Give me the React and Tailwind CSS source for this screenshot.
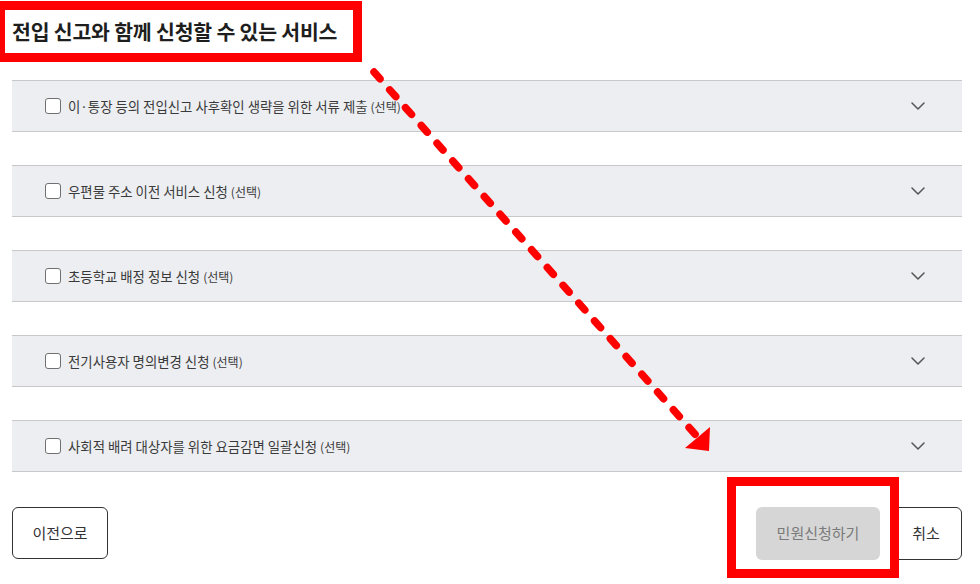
import React from "react";

const items = [
  "이·통장 등의 전입신고 사후확인 생략을 위한 서류 제출",
  "우편물 주소 이전 서비스 신청",
  "초등학교 배정 정보 신청",
  "전기사용자 명의변경 신청",
  "사회적 배려 대상자를 위한 요금감면 일괄신청",
];

function Chevron() {
  return (
    <svg width="14" height="8" viewBox="0 0 14 8" fill="none">
      <polyline points="1,1 7,7 13,1" stroke="#555" strokeWidth="1.5" strokeLinecap="round" strokeLinejoin="round" />
    </svg>
  );
}

export default function App() {
  return (
    <div className="relative w-[980px] h-[584px] bg-white overflow-hidden font-['Noto_Sans_CJK_KR',sans-serif] text-[#333]">
      <div className="h-[62px] flex items-center pl-[12px]">
        <h2 className="text-[20.5px] font-bold text-[#1e1e1e] tracking-[-0.2px]">전입 신고와 함께 신청할 수 있는 서비스</h2>
      </div>
      <div className="mt-[18px] ml-[12px] w-[950px] flex flex-col gap-[33px]">
        {items.map((t) => (
          <div key={t} className="h-[52px] bg-[#eceef1] border-y border-[#c8c8c8] flex items-center pl-[33px] pr-[37px]">
            <span className="w-[16px] h-[16px] rounded-[3px] border-[1.5px] border-[#707070] bg-white shrink-0" />
            <span className="ml-[7px] text-[13.4px] text-[#3a3a3a]">
              {t} <span className="text-[12px]">(선택)</span>
            </span>
            <span className="ml-auto flex items-center">
              <Chevron />
            </span>
          </div>
        ))}
      </div>
      <div className="mt-[35px] ml-[12px] w-[950px] flex justify-between">
        <button className="w-[96px] h-[52px] rounded-[6px] border border-[#333] bg-white text-[15px] text-[#333]">이전으로</button>
        <div className="flex gap-[10px]">
          <button className="w-[124px] h-[53px] rounded-[6px] bg-[#d6d6d6] text-[15px] text-[#7a7a7a]">민원신청하기</button>
          <button className="w-[72px] h-[53px] rounded-[6px] border border-[#333] bg-white text-[15px] text-[#333]">취소</button>
        </div>
      </div>

      <div className="absolute left-[-4px] top-[1px] w-[366px] h-[61px] border-[9px] border-[#ff0000] pointer-events-none" />
      <div className="absolute left-[727px] top-[477px] w-[172px] h-[101px] border-[9px] border-[#ff0000] pointer-events-none" />
      <svg className="absolute left-0 top-0 pointer-events-none" width="980" height="584" viewBox="0 0 980 584">
        <line x1="374" y1="72.1" x2="695.2" y2="434.4" stroke="#ff0000" strokeWidth="7.5" strokeLinecap="round" strokeDasharray="9 14.75" />
        <polygon points="710,427 709,451 685,448" fill="#ff0000" />
      </svg>
    </div>
  );
}
